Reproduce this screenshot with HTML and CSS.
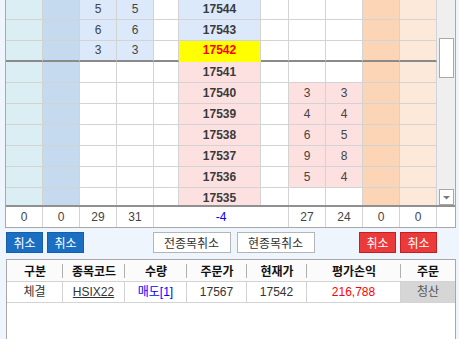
FILE: index.html
```html
<!DOCTYPE html>
<html lang="ko">
<head>
<meta charset="utf-8">
<link rel="stylesheet" href="styles.css">
</head>
<body>
<div class="book">
  <div class="book-top">
    <div class="rows-view">
      <div class="rows">
        <div class="row blue">
          <div class="c c1"></div><div class="c c2"></div><div class="c q bq">5</div><div class="c q bq">5</div><div class="c w5"></div><div class="c price pb">17544</div><div class="c w7"></div><div class="c q"></div><div class="c q"></div><div class="c c10"></div><div class="c c11"></div>
        </div>
        <div class="row">
          <div class="c c1"></div><div class="c c2"></div><div class="c q bq">6</div><div class="c q bq">6</div><div class="c w5"></div><div class="c price pb">17543</div><div class="c w7"></div><div class="c q"></div><div class="c q"></div><div class="c c10"></div><div class="c c11"></div>
        </div>
        <div class="row thick">
          <div class="c c1"></div><div class="c c2"></div><div class="c q bq">3</div><div class="c q bq">3</div><div class="c w5"></div><div class="c price cur">17542</div><div class="c w7"></div><div class="c q"></div><div class="c q"></div><div class="c c10"></div><div class="c c11"></div>
        </div>
        <div class="row">
          <div class="c c1"></div><div class="c c2"></div><div class="c q"></div><div class="c q"></div><div class="c w5"></div><div class="c price pp">17541</div><div class="c w7"></div><div class="c q"></div><div class="c q"></div><div class="c c10"></div><div class="c c11"></div>
        </div>
        <div class="row">
          <div class="c c1"></div><div class="c c2"></div><div class="c q"></div><div class="c q"></div><div class="c w5"></div><div class="c price pp">17540</div><div class="c w7"></div><div class="c q pq">3</div><div class="c q pq">3</div><div class="c c10"></div><div class="c c11"></div>
        </div>
        <div class="row">
          <div class="c c1"></div><div class="c c2"></div><div class="c q"></div><div class="c q"></div><div class="c w5"></div><div class="c price pp">17539</div><div class="c w7"></div><div class="c q pq">4</div><div class="c q pq">4</div><div class="c c10"></div><div class="c c11"></div>
        </div>
        <div class="row">
          <div class="c c1"></div><div class="c c2"></div><div class="c q"></div><div class="c q"></div><div class="c w5"></div><div class="c price pp">17538</div><div class="c w7"></div><div class="c q pq">6</div><div class="c q pq">5</div><div class="c c10"></div><div class="c c11"></div>
        </div>
        <div class="row">
          <div class="c c1"></div><div class="c c2"></div><div class="c q"></div><div class="c q"></div><div class="c w5"></div><div class="c price pp">17537</div><div class="c w7"></div><div class="c q pq">9</div><div class="c q pq">8</div><div class="c c10"></div><div class="c c11"></div>
        </div>
        <div class="row">
          <div class="c c1"></div><div class="c c2"></div><div class="c q"></div><div class="c q"></div><div class="c w5"></div><div class="c price pp">17536</div><div class="c w7"></div><div class="c q pq">5</div><div class="c q pq">4</div><div class="c c10"></div><div class="c c11"></div>
        </div>
        <div class="row">
          <div class="c c1"></div><div class="c c2"></div><div class="c q"></div><div class="c q"></div><div class="c w5"></div><div class="c price pp">17535</div><div class="c w7"></div><div class="c q"></div><div class="c q"></div><div class="c c10"></div><div class="c c11"></div>
        </div>
      </div>
    </div>
    <div class="vscroll">
      <div class="thumb"></div>
      <div class="arrow"><svg width="9" height="5" viewBox="0 0 9 5"><path d="M1 1h7L4.5 4.5z" fill="#7a7a7a"/></svg></div>
    </div>
  </div>
  <div class="totals">
    <div class="t">0</div><div class="t">0</div><div class="t">29</div><div class="t">31</div><div class="t mid">-4</div><div class="t">27</div><div class="t">24</div><div class="t">0</div><div class="t">0</div><div class="t end"></div>
  </div>
</div>

<div class="actions">
  <div class="grp">
    <button class="btn blue-btn">취소</button>
    <button class="btn blue-btn">취소</button>
  </div>
  <div class="grp mid-grp">
    <button class="btn plain">전종목취소</button>
    <button class="btn plain">현종목취소</button>
  </div>
  <div class="grp">
    <button class="btn red-btn">취소</button>
    <button class="btn red-btn">취소</button>
  </div>
</div>

<div class="list">
  <div class="lrow head">
    <div class="h">구분</div><div class="h">종목코드</div><div class="h">수량</div><div class="h">주문가</div><div class="h">현재가</div><div class="h">평가손익</div><div class="h last">주문</div>
  </div>
  <div class="lrow data">
    <div class="d">체결</div><div class="d"><span class="u">HSIX22</span></div><div class="d blue-t">매도[1]</div><div class="d">17567</div><div class="d">17542</div><div class="d red-t">216,788</div><div class="d gray">청산</div>
  </div>
</div>
</body>
</html>
```

FILE: styles.css
```css
* { box-sizing: border-box; }
html, body { margin: 0; padding: 0; }
body {
  width: 459px;
  height: 339px;
  overflow: hidden;
  background: #eef5fc;
  font-family: "Liberation Sans", "Noto Sans CJK KR", sans-serif;
  font-size: 12px;
  color: #333;
}

.book {
  margin-left: 5px;
  width: 451px;
  border-left: 1px solid #a8a8a8;
  border-right: 1px solid #a8a8a8;
  border-bottom: 1px solid #a8a8a8;
  background: #fff;
}
.book-top { display: flex; height: 205px; }
.rows-view { width: 431px; height: 205px; overflow: hidden; }
.rows { margin-top: -1px; }

.row {
  display: grid;
  grid-template-columns: 37px 37px 37px 37px 25px 82px 28px 37px 37px 37px 37px;
  height: 21px;
}
.c {
  border-right: 1px solid #d3d3d3;
  border-bottom: 1px solid #d3d3d3;
  background: #fff;
  text-align: center;
  line-height: 20px;
  color: #444;
}
.row.thick .c { border-bottom: 2px solid #8a8a8a; line-height: 19px; }
.row.thick .c.cur { border-bottom-color: #ffff00; }
.c1 { background: #dbeef3; }
.c2 { background: #c5daee; }
.bq { background: #dbe9fb; }
.pq { background: #fde1e1; }
.c10 { background: #fbd5b5; }
.c11 { background: #fde9d9; }
.price { font-weight: bold; color: #3a3a3a; font-size: 12px; }
.pb { background: #dbe9fb; }
.pp { background: #fde1e1; }
.cur { background: #ffff00; color: #ff0000; }

.vscroll {
  width: 18px;
  background: #efefef;
  display: flex;
  flex-direction: column;
  align-items: center;
  padding-top: 38px;
}
.thumb {
  width: 15px;
  height: 40px;
  background: #fff;
  border: 1px solid #a8a8a8;
}
.arrow {
  margin-top: 111px;
  width: 15px;
  height: 16px;
  background: #fff;
  border: 1px solid #a8a8a8;
  display: flex;
  align-items: center;
  justify-content: center;
}

.totals {
  display: grid;
  grid-template-columns: 37px 37px 37px 37px 135px 37px 37px 37px 37px 18px;
  border-top: 2px solid #909090;
  height: 22px;
}
.t {
  border-right: 1px solid #d3d3d3;
  text-align: center;
  line-height: 20px;
  color: #444;
}
.t.mid { color: #0000ff; }
.t.end { border-right: none; }

.actions {
  display: flex;
  justify-content: space-between;
  margin: 4px 22px 0 6px;
  height: 21px;
}
.grp { display: flex; gap: 4px; }
.mid-grp { gap: 6px; margin-left: 24px; }
.btn {
  font-family: "Noto Sans CJK KR", sans-serif;
  font-size: 12px;
  line-height: 19px;
  height: 21px;
  padding: 0;
  margin: 0;
  cursor: default;
}
.blue-btn {
  width: 37px;
  background: #1b6fc2;
  border: 1px solid #155fa8;
  color: #fff;
}
.red-btn {
  width: 37px;
  background: #ea3a3a;
  border: 1px solid #c52020;
  color: #fff;
}
.plain {
  width: 78px;
  background: #fff;
  border: 1px solid #b5b5b5;
  color: #333;
}

.list {
  margin: 6px 3px 0 6px;
  height: 81px;
  background: #fff;
  border: 1px solid #a8a8a8;
  border-bottom: none;
}
.lrow {
  display: grid;
  grid-template-columns: 56px 62px 62px 60px 60px 94px 54px;
}
.head { height: 22px; border-bottom: 1px solid #d3d3d3; background: #fbfbfb; }
.h {
  font-family: "Noto Sans CJK KR", sans-serif;
  font-weight: bold;
  color: #111;
  text-align: center;
  line-height: 21px;
  position: relative;
}
.h::after {
  content: "";
  position: absolute;
  right: 0;
  top: 4px;
  height: 14px;
  border-right: 1px solid #b0b0b0;
}
.h.last::after { display: none; }
.data { height: 21px; border-bottom: 1px solid #d3d3d3; }
.d {
  border-right: 1px solid #d3d3d3;
  text-align: center;
  line-height: 20px;
  color: #333;
}
.d:last-child { border-right: none; }
.u { text-decoration: underline; }
.blue-t { color: #0000ff; }
.red-t { color: #ff0000; }
.gray { background: #d6d6d6; color: #555; }
```
